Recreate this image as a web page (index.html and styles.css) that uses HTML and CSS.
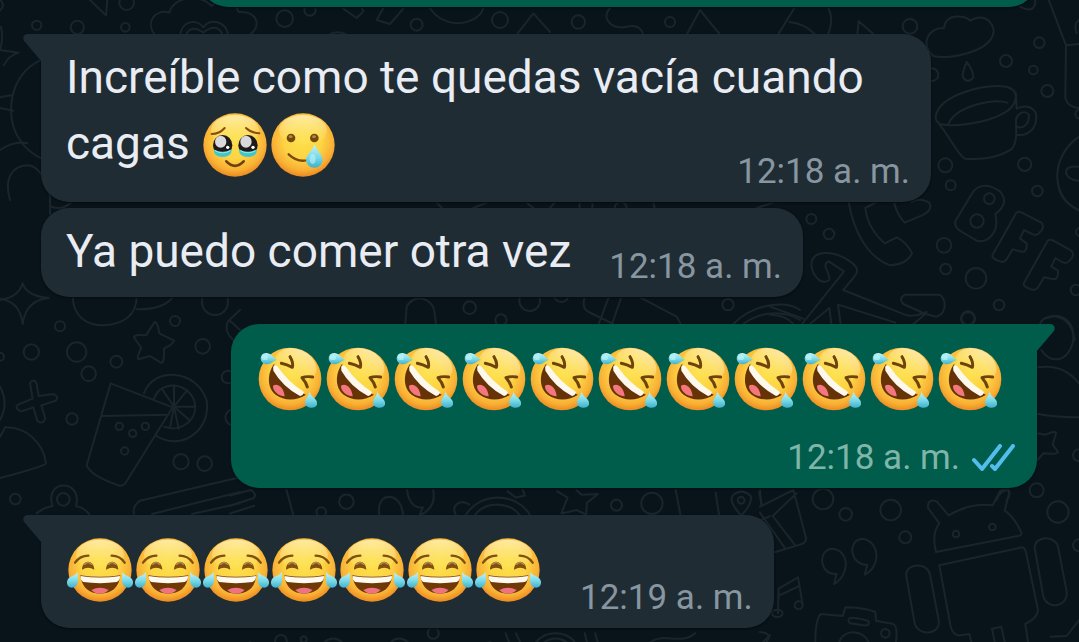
FILE: index.html
```html
<!DOCTYPE html>
<html lang="es">
<head>
<meta charset="utf-8">
<meta name="viewport" content="width=device-width, initial-scale=1">
<title>Chat</title>
<link rel="stylesheet" href="styles.css">
</head>
<body>
<svg class="defs" aria-hidden="true">
  <defs>
    <radialGradient id="face" cx=".5" cy=".42" r=".6">
      <stop offset="0" stop-color="#fde04a"/>
      <stop offset=".5" stop-color="#fcd444"/>
      <stop offset=".8" stop-color="#f9b035"/>
      <stop offset="1" stop-color="#e8821c"/>
    </radialGradient>
    <linearGradient id="shine" x1="0" y1="0" x2="0" y2="1">
      <stop offset="0" stop-color="#fff6c8" stop-opacity=".75"/>
      <stop offset="1" stop-color="#fff08a" stop-opacity="0"/>
    </linearGradient>
    <linearGradient id="drop" x1="0" y1="0" x2="0" y2="1">
      <stop offset="0" stop-color="#c4f4f6"/>
      <stop offset=".55" stop-color="#7bdae8"/>
      <stop offset="1" stop-color="#3fb0cc"/>
    </linearGradient>
    <symbol id="holding-tears" viewBox="33 28 204 204">
      <circle cx="135" cy="130" r="95" fill="url(#face)"/>
      <ellipse cx="135" cy="86" rx="72" ry="46" fill="url(#shine)"/>
      <path d="M65 97Q88 97 104 79M168 79Q184 94 208 95" fill="none" stroke="#8a4d10" stroke-width="6" stroke-linecap="round"/>
      <ellipse cx="98" cy="131" rx="29" ry="31" fill="#20191a"/>
      <ellipse cx="174" cy="131" rx="29" ry="31" fill="#20191a"/>
      <path d="M71 143Q98 158 125 143Q126 166 98 166Q71 166 71 143ZM147 143Q174 158 201 143Q201 166 174 166Q146 166 147 143Z" fill="#43c5cc"/>
      <path d="M75 147Q98 160 121 147M151 147Q174 160 197 147" fill="none" stroke="#9ce9e2" stroke-width="3"/>
      <ellipse cx="92" cy="120" rx="17" ry="18" fill="#d9d9dd"/>
      <ellipse cx="168" cy="120" rx="17" ry="18" fill="#d9d9dd"/>
      <circle cx="113" cy="137" r="5" fill="#fff"/><circle cx="189" cy="137" r="5" fill="#fff"/>
      <path d="M109 179Q135 206 161 179" fill="none" stroke="#70400c" stroke-width="8" stroke-linecap="round"/>
    </symbol>
    <symbol id="smile-tear" viewBox="238 28 204 204">
      <circle cx="340" cy="130" r="95" fill="url(#face)"/>
      <ellipse cx="340" cy="86" rx="72" ry="46" fill="url(#shine)"/>
      <circle cx="304" cy="109" r="13" fill="#744809"/><circle cx="374" cy="109" r="13" fill="#744809"/>
      <ellipse cx="303" cy="105" rx="6" ry="4" fill="#b38a4a"/><ellipse cx="373" cy="105" rx="6" ry="4" fill="#b38a4a"/>
      <path d="M297 158Q324 184 356 175" fill="none" stroke="#7b4909" stroke-width="7" stroke-linecap="round"/>
      <path d="M375 127C381 148 399 158 399 175A25 23 0 0 1 349 175C349 158 369 148 375 127Z" fill="url(#drop)"/>
      <ellipse cx="369" cy="172" rx="9" ry="15" fill="#bdf3fb" opacity=".6"/>
    </symbol>
    <symbol id="rofl" viewBox="18 31 204 204">
      <circle cx="120" cy="133" r="94" fill="url(#face)"/>
      <ellipse cx="138" cy="90" rx="64" ry="46" fill="url(#shine)" transform="rotate(25 138 90)"/>
      <path d="M120 66Q131 84 127 98Q111 90 94 86M188 127Q169 124 156 129Q168 142 172 157" fill="none" stroke="#70430c" stroke-width="9" stroke-linecap="round" stroke-linejoin="round"/>
      <path d="M72 88C52 116 50 159 77 180C103 200 142 198 168 180C128 166 95 132 72 88Z" fill="#663208"/>
      <path d="M69 153C84 142 103 162 104 185C84 183 68 169 69 153Z" fill="#f3777c"/>
      <path d="M72 92Q79 90 84 98Q118 145 162 172Q160 183 150 184Q98 156 70 108Q67 97 72 92Z" fill="#fdf8ed"/>
      <path d="M82 76C70 76 62 92 46 88C26 84 28 53 50 55C66 57 69 70 82 76Z" fill="url(#drop)"/>
      <path d="M178 170C181 187 205 192 201 210C195 225 166 220 165 204C165 190 178 185 178 170Z" fill="url(#drop)"/>
      <ellipse cx="45" cy="69" rx="9" ry="7" fill="#c8f7fc" opacity=".6"/>
    </symbol>
    <symbol id="joy" viewBox="33 31 204 204">
      <circle cx="135" cy="133" r="95" fill="url(#face)"/>
      <ellipse cx="135" cy="88" rx="72" ry="46" fill="url(#shine)"/>
      <path d="M60 111Q75 90 100 90M170 90Q195 90 209 111" fill="none" stroke="#80500e" stroke-width="7" stroke-linecap="round"/>
      <path d="M81 132C81 100 117 100 118 132Q99 120 81 132ZM153 132C154 100 189 100 190 132Q172 120 153 132Z" fill="#80500c"/>
      <path d="M88 117Q99 104 111 117M160 117Q171 104 183 117" fill="none" stroke="#b38a50" stroke-width="5"/>
      <path d="M76 149Q135 158 196 149C192 187 169 204 135 204C103 204 80 186 76 149Z" fill="#703807"/>
      <path d="M77 151Q135 160 195 151Q196 164 185 169Q135 176 85 169Q76 164 77 151Z" fill="#fffaf0"/>
      <path d="M109 193Q135 179 161 193Q151 204 135 204Q119 204 109 193Z" fill="#ed7480"/>
      <path d="M68 139C69 158 73 177 57 185C42 191 31 176 38 162C45 150 62 151 68 139Z" fill="url(#drop)"/>
      <path d="M202 139C201 158 197 177 213 185C228 191 239 176 232 162C225 150 208 151 202 139Z" fill="url(#drop)"/>
    </symbol>
  </defs>
</svg>

<main class="chat">
  <svg class="wallpaper" viewBox="0 0 1079 642" preserveAspectRatio="xMinYMin slice" aria-hidden="true">
    <g transform="scale(.333333)">
      <circle cx="110" cy="76" r="14"/><circle cx="232" cy="82" r="20"/><circle cx="376" cy="82" r="13"/><circle cx="380" cy="8" r="22"/><circle cx="854" cy="56" r="25"/><circle cx="930" cy="30" r="17"/>
      <path d="M270 0L318 46L322 0M465 105C435 68 465 25 508 38C520 -10 600 -22 635 18C660 -5 705 5 716 36C770 32 787 76 750 104M540 104C550 55 595 60 610 82C630 56 675 60 685 104M558 104Q575 72 610 98Q650 66 668 104"/>
      <path d="M0 150Q12 110 2 80M0 150L56 158Q24 168 12 196M120 182C30 220 10 350 60 420C78 450 100 464 126 476M0 292L34 286M0 324L40 332M0 450Q48 420 82 430M30 600C10 530 40 496 86 496Q130 504 150 590L150 642M150 618Q185 635 214 606M0 0Q18 14 0 32"/>
      <path d="M982 106Q1010 90 1036 102M1030 26L1070 54L1090 34L1080 10"/>
      <path d="M1150 24L1130 60L1170 72L1210 26M1290 24Q1320 70 1380 70Q1440 60 1450 24M1550 104L1600 40L1650 96M1830 24C1800 60 1840 90 1880 80Q1920 70 1930 104M2060 104L2100 30L2160 104"/>
      <circle cx="1250" cy="74" r="18"/><circle cx="1500" cy="60" r="24"/><circle cx="1735" cy="66" r="20"/><circle cx="2010" cy="66" r="15"/>
    </g>
    <g transform="translate(0 290) scale(.333333)">
      <path d="M0 30Q56 22 68 -20Q80 18 146 24Q78 30 68 102Q60 34 0 26M218 20C220 80 260 106 310 106C366 104 410 78 410 20M410 58Q490 60 520 20"/>
      <path d="M464 96Q472 94 478 130L522 152Q520 162 492 176Q494 222 482 218L450 198L416 208Q408 204 424 174L402 142Q402 132 438 136Z"/>
      <circle cx="180" cy="109" r="15"/><circle cx="94" cy="186" r="23"/><circle cx="230" cy="186" r="29"/><circle cx="266" cy="251" r="22"/><circle cx="349" cy="215" r="18"/><circle cx="525" cy="93" r="15"/><circle cx="608" cy="169" r="22"/><circle cx="645" cy="36" r="39"/><circle cx="216" cy="387" r="17"/><circle cx="543" cy="515" r="23"/><circle cx="614" cy="521" r="22"/><circle cx="46" cy="627" r="16"/><circle cx="0" cy="200" r="12"/><circle cx="684" cy="261" r="19"/><circle cx="700" cy="382" r="24"/>
      <path d="M90 280Q100 262 110 282L116 318L160 312Q178 318 168 332L124 346L136 386Q128 406 112 392L100 352L64 364Q42 356 54 344L98 326ZM0 290Q28 340 0 390"/>
      <path d="M332 280L518 352L376 580Q366 592 350 584C310 570 270 550 260 526L304 376ZM304 378L506 374M432 310C460 230 590 236 620 332C634 424 540 484 470 438M462 326C482 270 560 276 582 330C600 390 540 430 492 410M522 350L522 286M522 350L562 300M522 350L586 350M522 350L568 390M522 350L536 416M522 350L488 300M522 350L510 412"/>
      <circle cx="358" cy="409" r="11"/><circle cx="436" cy="409" r="11"/><circle cx="398" cy="430" r="11"/><circle cx="374" cy="483" r="11"/>
      <path d="M0 440L16 412C80 410 130 460 138 520Q130 530 0 564M110 670Q130 652 158 648C130 566 250 566 228 648Q250 652 268 672M402 672Q396 650 420 632L720 562M456 672L720 606M576 672L720 640M720 60L684 94Q670 124 700 150M690 92L720 120"/>
      <circle cx="190" cy="628" r="19"/>
    </g>
    <g transform="translate(770 0) scale(.333333)">
      <path d="M24 104L78 16M58 66Q102 70 134 102M172 20Q194 54 174 104M262 104L266 64L310 102M490 168C450 136 472 82 522 84C526 40 586 44 600 62C650 34 680 80 668 106C650 158 530 180 490 168M590 186Q578 214 578 230Q592 254 610 232Q610 210 590 186M498 346C510 286 640 250 710 260C754 272 740 320 700 340C640 374 540 380 510 372Q494 362 498 346M536 370C560 318 670 294 712 308M508 374C540 410 560 460 584 476Q670 482 724 448Q742 430 738 380M738 280L740 326Q780 308 798 340C804 388 770 410 740 404M740 380C730 344 760 326 776 344C780 374 756 388 740 380M836 0L888 136L927 132M888 136L886 294Q894 322 927 324M927 410C840 470 840 590 927 632M927 500Q886 496 888 520Q896 540 927 542M750 20Q796 44 796 0M927 60Q910 70 920 100"/>
      <circle cx="420" cy="79" r="22"/><circle cx="808" cy="128" r="16"/><circle cx="708" cy="183" r="18"/><circle cx="790" cy="210" r="13"/><circle cx="832" cy="273" r="18"/><circle cx="486" cy="224" r="19"/><circle cx="526" cy="496" r="21"/><circle cx="764" cy="493" r="20"/><circle cx="542" cy="556" r="15"/><circle cx="802" cy="573" r="16"/><circle cx="930" cy="342" r="14"/>
    </g>
    <g transform="translate(770 190) scale(.333333)">
      <path d="M236 36C250 120 290 200 360 226Q410 224 426 190Q410 156 380 142L344 160C310 130 290 90 286 54L320 36M372 36Q380 72 404 98L456 76Q490 60 478 38Q450 22 424 36M558 90L610 4Q640 -30 690 4Q720 40 676 72C690 130 650 160 620 152L576 126Q548 110 558 90M668 194L738 70Q744 60 760 70L814 98Q826 112 810 126Q800 140 786 132L762 120L750 146L770 160Q772 192 750 184L728 178L710 208Q700 222 680 210Q664 204 668 194M762 278L832 154Q838 144 854 154L904 182Q916 196 900 210Q890 224 876 216L856 204L844 230L864 242Q866 274 844 266L822 262L804 292Q794 306 774 294Q758 288 762 278"/>
      <path d="M96 402L222 244L176 214C150 224 184 252 178 270C150 290 124 250 124 220C130 180 190 180 240 214Q272 236 256 256L220 300L410 376Q440 380 470 366M100 386L0 350M212 402L204 344L376 398M184 402L178 354L120 402M0 374Q50 376 70 402M430 402L466 372L500 380C530 370 530 330 510 314L406 314Q384 324 400 342L466 372M810 402C820 370 900 360 914 450M868 0Q880 40 927 60"/>
      <circle cx="658" cy="26" r="16"/><circle cx="621" cy="93" r="20"/><circle cx="124" cy="87" r="15"/><circle cx="177" cy="132" r="16"/><circle cx="522" cy="166" r="22"/><circle cx="527" cy="237" r="16"/><circle cx="618" cy="265" r="31"/><circle cx="687" cy="345" r="16"/><circle cx="594" cy="388" r="21"/><circle cx="918" cy="300" r="16"/><circle cx="930" cy="126" r="12"/>
    </g>
    <g transform="translate(900 310) scale(.333333)">
      <path d="M424 120C450 160 500 160 518 100C530 40 490 4 440 24M414 172Q490 160 537 220M414 312Q470 322 537 322M412 370L436 374Q470 360 468 370L458 404L474 426Q470 434 430 430L412 450M290 570Q300 540 326 540Q334 556 320 570"/>
      <circle cx="537" cy="436" r="18"/><circle cx="204" cy="24" r="20"/>
    </g>
    <g transform="translate(400 190) scale(.333333)">
      <path d="M16 402L20 350C40 310 100 320 104 370L108 402M554 322Q544 356 566 366L640 402M596 402L626 322M636 402L664 322M720 322L830 380L842 402M1000 402C1060 340 1160 330 1200 360M1030 402C1080 364 1150 360 1200 390M110 38L126 54M220 54L260 38M380 38L400 54M450 54L464 38M760 38L764 54M1070 54L1120 38"/>
      <circle cx="209" cy="353" r="19"/><circle cx="303" cy="390" r="17"/><circle cx="389" cy="332" r="31"/><circle cx="484" cy="314" r="22"/><circle cx="984" cy="344" r="17"/><circle cx="558" cy="46" r="20"/><circle cx="662" cy="54" r="18"/>
    </g>
    <g transform="translate(230 470) scale(.344444)">
      <path d="M0 74L60 58Q80 70 68 82L0 104M0 126L70 104M164 58L184 132M434 132C420 60 500 60 502 132M514 58C520 110 550 110 560 108Q550 130 550 132Q600 110 590 58M656 132C640 100 670 84 694 100M684 132C720 66 830 60 872 132M710 132C740 90 810 90 842 132M806 62L830 80L856 74L850 58M950 62L980 80L962 126L1006 116L1034 130L1036 96L1068 70L1020 72L1006 58M1294 58L1308 132M1410 66L1420 132M1484 132C1464 110 1450 90 1458 76Q1484 50 1512 76Q1516 100 1484 132M1536 66L1544 100M1530 150L1568 134"/>
      <path d="M0 516L60 500M264 516C280 480 320 480 334 516M460 516C470 480 510 480 526 516M800 474L816 516M830 474L850 516M880 516C900 460 990 460 1010 516M900 516C920 480 970 480 990 516M1030 474L1040 516M1060 474L1072 516M1220 500C1260 470 1310 510 1350 474M1568 480L1530 516"/>
      <circle cx="338" cy="92" r="21"/><circle cx="265" cy="122" r="14"/><circle cx="1122" cy="102" r="16"/><circle cx="1225" cy="97" r="31"/><circle cx="1484" cy="88" r="10"/><circle cx="148" cy="496" r="17"/><circle cx="214" cy="492" r="9"/><circle cx="590" cy="474" r="16"/><circle cx="754" cy="512" r="12"/>
    </g>
    <g transform="translate(760 480) scale(.333333)">
      <path d="M0 80L100 30L138 174Q140 188 120 194L46 216M0 98L76 206M110 40L38 108L104 194M222 312L230 282C180 288 170 210 216 206C270 210 270 286 222 312M314 284L322 254C270 256 260 180 308 176C360 184 364 260 314 284M54 400L56 326L114 292L128 374M58 346L118 318"/>
      <ellipse cx="52" cy="400" rx="16" ry="11"/><circle cx="116" cy="376" r="12"/>
      <path d="M166 486Q166 420 182 402L248 408L256 382Q310 382 346 396L348 422L400 432Q414 440 408 486M238 486C250 446 310 448 326 486M270 414Q300 412 326 424Q330 438 310 436L270 430Q260 420 270 414"/>
      <circle cx="376" cy="460" r="13"/>
      <path d="M528 216Q514 160 538 130L504 84Q502 54 530 64L566 106Q630 68 698 76L720 34Q750 10 746 44L734 92Q764 112 784 158Q786 166 774 168ZM538 256L786 202Q796 204 798 218L834 390Q834 412 796 432L804 486M538 256L572 440Q580 468 602 466L628 462L634 486M704 486L696 446L724 440L734 486M438 284C440 250 500 244 510 284L536 420C544 466 474 470 464 430ZM824 204C824 166 886 166 894 200L920 334C926 380 864 392 850 350ZM872 470L920 468L957 420"/>
      <circle cx="588" cy="162" r="10"/><circle cx="697" cy="141" r="10"/><circle cx="189" cy="57" r="31"/><circle cx="257" cy="103" r="19"/><circle cx="392" cy="90" r="31"/><circle cx="436" cy="172" r="18"/><circle cx="830" cy="31" r="21"/><circle cx="894" cy="96" r="32"/><circle cx="957" cy="196" r="18"/><path d="M0 456Q40 460 20 486M0 30L4 76"/>
    </g>
  </svg>

  <article class="message sent previous" aria-label="Mensaje anterior"></article>

  <article class="message received tailed new-group">
    <svg class="tail" viewBox="0 0 19 28" aria-hidden="true"><path d="M19 0H5C0 0-1 5 2 8L19 28Z"/></svg>
    <p class="text wrapping">Increíble como te quedas vacía cuando cagas <svg class="emoji" role="img" aria-label="🥹"><use href="#holding-tears"/></svg><svg class="emoji" role="img" aria-label="🥲"><use href="#smile-tear"/></svg><time class="meta" datetime="00:18">12:18 a. m.</time></p>
  </article>

  <article class="message received inline">
    <p class="text">Ya puedo comer otra vez</p>
    <footer class="meta"><time datetime="00:18">12:18 a. m.</time></footer>
  </article>

  <article class="message sent tailed new-group">
    <svg class="tail" viewBox="0 0 19 28" aria-hidden="true"><path d="M0 0H14C19 0 20 5 17 8L0 28Z"/></svg>
    <p class="emojis wide">
      <svg class="emoji" role="img" aria-label="🤣"><use href="#rofl"/></svg>
      <svg class="emoji" role="img" aria-label="🤣"><use href="#rofl"/></svg>
      <svg class="emoji" role="img" aria-label="🤣"><use href="#rofl"/></svg>
      <svg class="emoji" role="img" aria-label="🤣"><use href="#rofl"/></svg>
      <svg class="emoji" role="img" aria-label="🤣"><use href="#rofl"/></svg>
      <svg class="emoji" role="img" aria-label="🤣"><use href="#rofl"/></svg>
      <svg class="emoji" role="img" aria-label="🤣"><use href="#rofl"/></svg>
      <svg class="emoji" role="img" aria-label="🤣"><use href="#rofl"/></svg>
      <svg class="emoji" role="img" aria-label="🤣"><use href="#rofl"/></svg>
      <svg class="emoji" role="img" aria-label="🤣"><use href="#rofl"/></svg>
      <svg class="emoji" role="img" aria-label="🤣"><use href="#rofl"/></svg>
    </p>
    <footer class="meta below"><time datetime="00:18">12:18 a. m.</time><svg class="ticks" viewBox="0 0 44 28" role="img" aria-label="Leído"><path d="M2 16L10 25L28 2M20 22L23 25L41 2"/></svg></footer>
  </article>

  <article class="message received tailed inline new-group">
    <svg class="tail" viewBox="0 0 19 28" aria-hidden="true"><path d="M19 0H5C0 0-1 5 2 8L19 28Z"/></svg>
    <p class="emojis">
      <svg class="emoji" role="img" aria-label="😂"><use href="#joy"/></svg>
      <svg class="emoji" role="img" aria-label="😂"><use href="#joy"/></svg>
      <svg class="emoji" role="img" aria-label="😂"><use href="#joy"/></svg>
      <svg class="emoji" role="img" aria-label="😂"><use href="#joy"/></svg>
      <svg class="emoji" role="img" aria-label="😂"><use href="#joy"/></svg>
      <svg class="emoji" role="img" aria-label="😂"><use href="#joy"/></svg>
      <svg class="emoji" role="img" aria-label="😂"><use href="#joy"/></svg>
    </p>
    <footer class="meta"><time datetime="00:19">12:19 a. m.</time></footer>
  </article>
</main>
</body>
</html>
```
FILE: styles.css
```css
* {
  box-sizing: border-box;
}

body {
  margin: 0;
  background: #08141a;
  color: #e9edf3;
  font-family: Roboto, "Noto Sans", sans-serif;
}

.defs {
  position: absolute;
  width: 0;
  height: 0;
}

/* Messages are anchored to the bottom; older ones run off the top. */
.chat {
  position: relative;
  display: flex;
  flex-direction: column;
  justify-content: flex-end;
  height: 100vh;
  padding: 0 42px 14px 41px;
  overflow: hidden;
}

.wallpaper {
  position: absolute;
  top: 0;
  left: 0;
  width: 100%;
  height: 100%;
  fill: none;
  stroke: #19252b;
  stroke-width: 6;
  stroke-linecap: round;
  stroke-linejoin: round;
}

.message {
  position: relative;
  flex-shrink: 0;
  max-width: 894px;
  margin-top: 6px;
  padding: 10px 21px 10px 25px;
  border-radius: 28px;
  box-shadow: 0 1px 2px #040b0f;
}

.received {
  align-self: flex-start;
  background: #202c33;
  fill: #202c33;
}

.sent {
  align-self: flex-end;
  background: #005d4b;
  fill: #005d4b;
}

.previous {
  width: 84%;
  min-height: 90px;
}

.new-group {
  margin-top: 27px;
}

.received.tailed {
  max-width: 890px;
  border-top-left-radius: 0;
}

.sent.tailed {
  border-top-right-radius: 0;
}

.tail {
  position: absolute;
  top: 0;
  width: 19px;
  height: 28px;
}

.received .tail {
  right: calc(100% - 1px);
}

.sent .tail {
  left: calc(100% - 1px);
}

.text {
  margin: 0;
  font-size: 46px;
  line-height: 66px;
}

.emoji {
  width: 68px;
  height: 68px;
  overflow: visible;
}

.text .emoji {
  margin: -4px 0;
  vertical-align: -16px;
}

.emojis {
  display: flex;
  margin: 0;
  padding: 11px 0 14px;
}

.emojis.wide {
  padding-right: 12px;
}

.meta {
  display: flex;
  justify-content: flex-end;
  align-items: center;
  gap: 12px;
  color: #8796a0;
  font-size: 35px;
  line-height: 40px;
  white-space: nowrap;
}

.sent .meta {
  color: #80b5aa;
}

/* The time floats beside the last line and hangs a little below it. */
.wrapping {
  display: flow-root;
}

.wrapping .meta {
  float: right;
  margin-top: 42px;
}

.below {
  margin-top: 11px;
}

.inline {
  display: flex;
  align-items: flex-end;
  gap: 38px;
}

.inline .text {
  padding-bottom: 3px;
}

.ticks {
  width: 44px;
  height: 28px;
  fill: none;
  stroke: #53bdeb;
  stroke-width: 4;
  stroke-linecap: round;
  stroke-linejoin: round;
}
```
